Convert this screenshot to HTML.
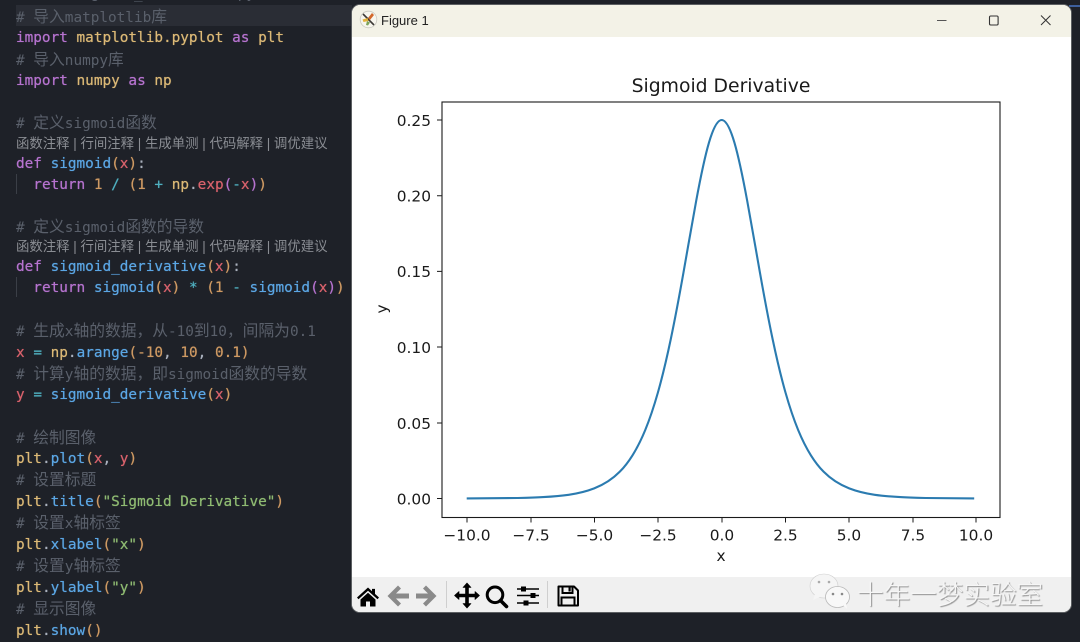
<!DOCTYPE html>
<html lang="zh">
<head>
<meta charset="utf-8">
<title>Sigmoid Derivative</title>
<style>
html,body{margin:0;padding:0;background:#1e2128;}
body{width:1080px;height:641px;position:relative;overflow:hidden;}
#code{position:absolute;left:0;top:0;width:352px;height:641px;filter:blur(.35px);}
.l{position:absolute;left:16px;height:21px;line-height:21px;white-space:pre;font-family:"DejaVu Sans Mono","Noto Sans CJK SC",monospace;font-size:14.37px;color:#abb2bf;text-shadow:0 0 .6px currentColor;}
.l i{font-style:normal;font-family:"Noto Sans CJK SC",sans-serif;font-size:15.75px;}
.c{color:#5a606b;text-shadow:none;}
.k{color:#b673cf;}.y{color:#dcb976;}.b{color:#5ba6e4;}.r{color:#d9626c;}.o{color:#cf9a63;}.t{color:#4fb0c0;}.g{color:#8fbb72;}.w{color:#aab1bd;}
.lens{position:absolute;left:16px;height:18px;line-height:18px;white-space:pre;font-family:"Liberation Sans","Noto Sans CJK SC",sans-serif;font-size:13.4px;color:#8a8d93;}
.guide{position:absolute;left:16px;width:1px;background:#3b3f47;}
#hl{position:absolute;left:16px;top:5px;width:336px;height:21px;background:#2a2d35;}
#win{position:absolute;left:352px;top:5px;width:719px;height:607px;border-radius:8px;overflow:hidden;background:#fff;box-shadow:0 0 0 1px #5c5f62;}
#tb{position:absolute;left:0;top:0;width:719px;height:32px;background:#f3f2e7;}
#tool{position:absolute;left:0;top:572px;width:719px;height:35px;background:#f0f0f0;}
#ttl{position:absolute;left:29px;top:7px;font:13px/18px "Liberation Sans",sans-serif;color:#222;}
svg{position:absolute;left:0;top:0;}
svg text{font-family:"DejaVu Sans",sans-serif;fill:#1a1a1a;}
#wm{position:absolute;left:857px;top:577px;font:26.6px/32px "Noto Sans CJK SC",sans-serif;font-weight:300;color:#f6f6f6;white-space:nowrap;text-shadow:1px 1px 1px #8c8c8c;}
</style>
</head>
<body>
<div id="hl"></div>
<div id="code">
<div class="l c" style="top:-19px"># <i>文件</i> sigmoid_derivative.py</div>
<div class="l c" style="top:5px"># <i>导入</i>matplotlib<i>库</i></div>
<div class="l" style="top:28px"><span class="k">import</span> <span class="y">matplotlib.pyplot</span> <span class="k">as</span> <span class="y">plt</span></div>
<div class="l c" style="top:48px"># <i>导入</i>numpy<i>库</i></div>
<div class="l" style="top:71px"><span class="k">import</span> <span class="y">numpy</span> <span class="k">as</span> <span class="y">np</span></div>
<div class="l c" style="top:111px"># <i>定义</i>sigmoid<i>函数</i></div>
<div class="lens" style="top:135px">函数注释 | 行间注释 | 生成单测 | 代码解释 | 调优建议</div>
<div class="l" style="top:154px"><span class="k">def</span> <span class="b">sigmoid</span><span class="o">(</span><span class="r">x</span><span class="o">)</span><span class="w">:</span></div>
<div class="guide" style="top:174px;height:20px"></div>
<div class="l" style="top:175px">  <span class="k">return</span> <span class="o">1</span> <span class="t">/</span> <span class="o">(1</span> <span class="t">+</span> <span class="y">np</span>.<span class="r">exp</span><span class="k">(</span><span class="t">-</span><span class="r">x</span><span class="k">)</span><span class="o">)</span></div>
<div class="l c" style="top:215px"># <i>定义</i>sigmoid<i>函数的导数</i></div>
<div class="lens" style="top:238px">函数注释 | 行间注释 | 生成单测 | 代码解释 | 调优建议</div>
<div class="l" style="top:257px"><span class="k">def</span> <span class="b">sigmoid_derivative</span><span class="o">(</span><span class="r">x</span><span class="o">)</span><span class="w">:</span></div>
<div class="guide" style="top:277px;height:20px"></div>
<div class="l" style="top:278px">  <span class="k">return</span> <span class="b">sigmoid</span><span class="o">(</span><span class="r">x</span><span class="o">)</span> <span class="t">*</span> <span class="o">(1</span> <span class="t">-</span> <span class="b">sigmoid</span><span class="k">(</span><span class="r">x</span><span class="k">)</span><span class="o">)</span></div>
<div class="l c" style="top:319px"># <i>生成</i>x<i>轴的数据，从</i>-10<i>到</i>10<i>，间隔为</i>0.1</div>
<div class="l" style="top:343px"><span class="r">x</span> <span class="t">=</span> <span class="y">np</span>.<span class="b">arange</span><span class="o">(</span><span class="o">-10</span>, <span class="o">10</span>, <span class="o">0.1)</span></div>
<div class="l c" style="top:362px"># <i>计算</i>y<i>轴的数据，即</i>sigmoid<i>函数的导数</i></div>
<div class="l" style="top:385px"><span class="r">y</span> <span class="t">=</span> <span class="b">sigmoid_derivative</span><span class="o">(</span><span class="r">x</span><span class="o">)</span></div>
<div class="l c" style="top:426px"># <i>绘制图像</i></div>
<div class="l" style="top:449px"><span class="y">plt</span>.<span class="b">plot</span><span class="o">(</span><span class="r">x</span>, <span class="r">y</span><span class="o">)</span></div>
<div class="l c" style="top:468px"># <i>设置标题</i></div>
<div class="l" style="top:492px"><span class="y">plt</span>.<span class="b">title</span><span class="o">(</span><span class="g">"Sigmoid Derivative"</span><span class="o">)</span></div>
<div class="l c" style="top:511px"># <i>设置</i>x<i>轴标签</i></div>
<div class="l" style="top:535px"><span class="y">plt</span>.<span class="b">xlabel</span><span class="o">(</span><span class="g">"x"</span><span class="o">)</span></div>
<div class="l c" style="top:554px"># <i>设置</i>y<i>轴标签</i></div>
<div class="l" style="top:578px"><span class="y">plt</span>.<span class="b">ylabel</span><span class="o">(</span><span class="g">"y"</span><span class="o">)</span></div>
<div class="l c" style="top:597px"># <i>显示图像</i></div>
<div class="l" style="top:621px"><span class="y">plt</span>.<span class="b">show</span><span class="o">()</span></div>
</div>

<div style="position:absolute;left:1069px;top:5px;width:11px;height:2px;background:#3d5f9c"></div>

<div id="win">
  <div id="tb"></div>
  <div id="ttl">Figure 1</div>
  <div id="tool"></div>
</div>

<svg width="1080" height="641" viewBox="0 0 1080 641">
  <!-- title icon -->
  <circle cx="368.5" cy="19.5" r="8.3" fill="#f7f6ee" stroke="#c9c8c0" stroke-width=".8"/>
  <path d="M363 14l11 11" stroke="#3c3a36" stroke-width="1.6"/>
  <path d="M362.5 19.5l5-1.5 1 3-5 1z" fill="#e3b23c"/>
  <path d="M368 18l4-5 2 2-4 5z" fill="#d2682c"/>
  <path d="M367 21l-1 4 2 .5 2-3z" fill="#7da35a"/>
  <!-- window controls -->
  <path d="M937 20.5h9.5" stroke="#555" stroke-width="1"/>
  <rect x="989.5" y="16" width="8.6" height="9" rx="1.2" fill="none" stroke="#333" stroke-width="1.1"/>
  <path d="M1041 15.5l9.5 9.5M1050.5 15.5l-9.5 9.5" stroke="#333" stroke-width="1"/>

  <!-- axes -->
  <rect x="442" y="102" width="558" height="415.5" fill="#fff" stroke="#1a1a1a" stroke-width="1.1"/>
  <g stroke="#1a1a1a" stroke-width="1">
    <path d="M467 517.5v5M531 517.5v5M594.5 517.5v5M658 517.5v5M722 517.5v5M785.5 517.5v5M849 517.5v5M913 517.5v5M976 517.5v5"/>
    <path d="M437 120h5M437 195.7h5M437 271.4h5M437 347h5M437 423h5M437 498.5h5"/>
  </g>
  <path fill="none" stroke="#2b7bb0" stroke-width="2.1" stroke-linejoin="round" d="M466.7 498.4L517.7 498C526.2 497.8 534.7 497.6 543.2 497.1C551.7 496.6 560.2 496 568.7 494.8C577.2 493.6 585.7 491.7 594.2 488.4C602.7 485.1 611.2 480.4 619.7 471.8C623.95 467.5 628.2 462.2 632.45 455.4C636.7 448.6 640.95 440.4 645.2 430.1C649.45 419.8 653.7 407.4 657.95 392.4C662.2 377.4 666.45 359.7 670.7 339.5C674.95 319.3 679.2 296.6 683.45 272.7C687.7 248.8 691.95 223.7 696.2 200.8C700.45 177.9 704.7 157.2 708.95 142.7C713.2 128.2 717.45 120 721.7 120C725.95 120 730.2 128.2 734.45 142.7C738.7 157.2 742.95 177.9 747.2 200.8C751.45 223.7 755.7 248.8 759.95 272.7C764.2 296.6 768.45 319.3 772.7 339.5C776.95 359.7 781.2 377.4 785.45 392.4C789.7 407.4 793.95 419.8 798.2 430.1C802.45 440.4 806.7 448.6 810.95 455.4C815.2 462.2 819.45 467.5 823.7 471.8C832.2 480.4 840.7 485.1 849.2 488.4C857.7 491.7 866.2 493.6 874.7 494.8C883.2 496 891.7 496.6 900.2 497.1C908.7 497.6 917.2 497.8 925.7 498L974.2 498.4"/>
  <g font-size="15.4" text-anchor="end">
    <text x="431" y="125.8">0.25</text>
    <text x="431" y="201.5">0.20</text>
    <text x="431" y="277.2">0.15</text>
    <text x="431" y="352.8">0.10</text>
    <text x="431" y="428.8">0.05</text>
    <text x="431" y="504.3">0.00</text>
  </g>
  <g font-size="15.4" text-anchor="middle">
    <text x="467" y="540.5">−10.0</text>
    <text x="531" y="540.5">−7.5</text>
    <text x="594.5" y="540.5">−5.0</text>
    <text x="658" y="540.5">−2.5</text>
    <text x="722" y="540.5">0.0</text>
    <text x="785.5" y="540.5">2.5</text>
    <text x="849" y="540.5">5.0</text>
    <text x="913" y="540.5">7.5</text>
    <text x="976" y="540.5">10.0</text>
    <text x="721" y="561">x</text>
  </g>
  <text x="721" y="92" font-size="18.8" text-anchor="middle">Sigmoid Derivative</text>
  <text transform="translate(387,309) rotate(-90)" font-size="15.4" text-anchor="middle">y</text>

  <!-- toolbar: home -->
  <path d="M368 587.5l-11 10 1.5 1.8 9.5-8.6 9.5 8.6 1.5-1.8-4-3.6v-5h-3v2.3z" fill="#000"/>
  <path d="M360.5 599.5l7.5-6.7 7.500 6.700v7h-5.500v-5h-4v5h-5.500z" fill="#000"/>
  <!-- back / forward -->
  <path d="M398 585.5l3 3-5 5h13v5h-13l5 5-3 3-10.500-10.500z" fill="#8a8a8a"/>
  <path d="M426 585.500l-3 3 5 5h-12v5h12l-5 5 3 3 10.500-10.500z" fill="#8a8a8a"/>
  <rect x="446" y="581" width="1" height="27" fill="#cfcfcf"/>
  <!-- move -->
  <path d="M467 583l4 4.500h-2.500v6.500h6.500v-2.500l4.500 4-4.500 4v-2.500h-6.500v6.500h2.500l-4 4.500-4-4.500h2.500v-6.500h-6.500v2.500l-4.500-4 4.500-4v2.500h6.500v-6.500h-2.500z" fill="#000" stroke="#000" stroke-width=".6" stroke-linejoin="round"/>
  <!-- zoom -->
  <circle cx="495" cy="594.800" r="7.800" fill="none" stroke="#000" stroke-width="3"/>
  <path d="M500.500 600.500l6 6" stroke="#000" stroke-width="3.600" stroke-linecap="round"/>
  <!-- sliders -->
  <path d="M517 589h22M517 595.500h22M517 603h22" stroke="#000" stroke-width="1.600"/>
  <rect x="521" y="586.500" width="5" height="5" fill="#000"/>
  <rect x="530.500" y="593" width="5" height="5" fill="#000"/>
  <rect x="523.500" y="600.500" width="5" height="5" fill="#000"/>
  <rect x="547" y="581" width="1" height="27" fill="#cfcfcf"/>
  <!-- save -->
  <path d="M558.500 586.500h15.500l4 4v15h-19.500z" fill="none" stroke="#000" stroke-width="2" stroke-linejoin="round"/>
  <path d="M562.500 586.500v6.500h10v-6.500" fill="none" stroke="#000" stroke-width="2"/>
  <rect x="568.500" y="587.500" width="2.200" height="4" fill="#000"/>
  <rect x="561.500" y="597.500" width="13" height="8" fill="none" stroke="#000" stroke-width="2"/>

  <!-- watermark icon -->
  <g>
    <ellipse cx="824" cy="586" rx="14" ry="12" fill="#f5f5f5" stroke="#cfcfcf" stroke-width=".6"/>
    <path d="M815 594l-2 6 7-3z" fill="#f5f5f5"/>
    <ellipse cx="837.500" cy="597" rx="12" ry="10.500" fill="#f8f8f8" stroke="#b8b8b8" stroke-width=".8"/>
    <path d="M843 605l4 4-1-6z" fill="#f8f8f8"/>
    <circle cx="819" cy="582" r="1.300" fill="#aaa"/>
    <circle cx="829" cy="582" r="1.300" fill="#aaa"/>
    <circle cx="833" cy="594" r="1.300" fill="#888"/>
    <circle cx="842" cy="594" r="1.300" fill="#888"/>
  </g>
</svg>
<div id="wm">十年一梦实验室</div>
</body>
</html>
